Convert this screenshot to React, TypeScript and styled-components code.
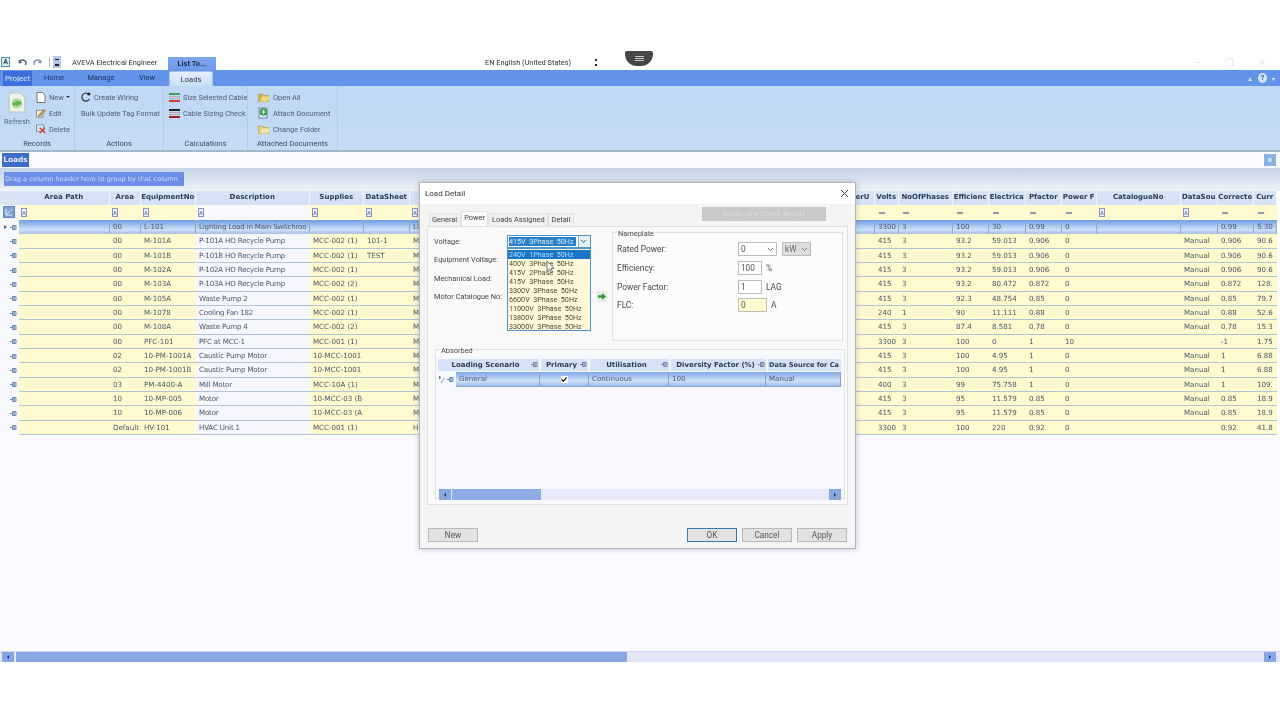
import React from "react";
import styled, { createGlobalStyle } from "styled-components";

const Global = createGlobalStyle`
  html, body { margin: 0; padding: 0; background: #fff; }
  * { box-sizing: border-box; }
`;

const UI = `Roboto, "Liberation Sans", sans-serif`;
const GRIDFONT = `"DejaVu Sans", "Liberation Sans", sans-serif`;

const Page = styled.div`
  width: 1280px; height: 720px; position: relative; overflow: hidden;
  background: #fff; display: flex; flex-direction: column;
  font-family: ${UI}; color: #333; filter: blur(0.3px);
`;
const TopBlank = styled.div`height: 54px;`;

const TitleBar = styled.div`
  height: 16px; display: flex; align-items: center; background: #fff; position: relative;
`;
const QatSlot = styled.span<{ $w: number }>`
  width: ${p => p.$w}px; display: flex; align-items: center; justify-content: center; flex: none;
`;
const AppMark = styled.span`
  width: 9px; height: 10px; margin-left: 1px; border: 1px solid #5a8f9f; background: #d8eef2;
  color: #24505f; font: bold 7px/8px ${UI}; text-align: center; flex: none;
`;
const QatSep = styled.span`width: 1px; height: 10px; background: #bbb; margin: 0 3px 0 2px; flex: none;`;
const QatDrop = styled.span`
  width: 8px; height: 12px; background: #b4c6e6; flex: none; display: flex; align-items: center; justify-content: center;
  &::after { content: ""; width: 4px; height: 4px; border-top: 1px solid #223; border-bottom: 2px solid #223; }
`;
const AppTitle = styled.span`font-size: 7.4px; color: #333; margin-left: 11px; width: 96px; flex: none; white-space: nowrap;`;
const ContextTab = styled.span`
  width: 48px; height: 13px; align-self: flex-end; background: linear-gradient(#7fa6ec, #6f9aea);
  color: #1c2c50; font: bold 7.5px/13px ${UI}; text-align: center; flex: none;
`;
const Language = styled.span`font-size: 7.4px; color: #333; margin-left: 269px; width: 110px; flex: none; white-space: nowrap;`;
const LangDots = styled.span`
  width: 2px; height: 7px; flex: none; border-top: 2px solid #222; border-bottom: 2px solid #222;
`;
const ScreenHandle = styled.div`
  position: absolute; left: 625px; top: -3px; width: 28px; height: 15px; background: #464646;
  border-radius: 2px 2px 12px 12px; display: flex; flex-direction: column; align-items: center; justify-content: center; gap: 1px;
  & > i { display: block; width: 9px; height: 1px; background: #ccc; }
`;
const WinButtons = styled.div`
  position: absolute; right: 14px; top: 4px; display: flex; gap: 24px; color: #e6e6e6; font-size: 10px; line-height: 10px;
`;

const TabBar = styled.div`
  height: 16px; background: #6494ea; display: flex; align-items: stretch; position: relative;
`;
const ProjectTab = styled.span`
  margin-left: 3px; width: 29px; margin-top: 1px; background: #3e6edb; color: #dfe8ff;
  font-size: 8px; line-height: 15px; text-align: center;
`;
const RibbonTab = styled.span<{ $c: number }>`
  position: absolute; left: ${p => p.$c - 25}px; width: 50px; top: 0; text-align: center;
  font-size: 7.5px; line-height: 16px; color: #1d3468;
`;
const ActiveTab = styled.span`
  position: absolute; left: 169px; width: 44px; top: 1px; bottom: 0; text-align: center;
  background: linear-gradient(#e3eefc, #c9ddf7); border: 1px solid #a9c4ea; border-bottom: 0; border-radius: 2px 2px 0 0;
  font-size: 7.6px; line-height: 15px; color: #2b3a58;
`;
const HelpCluster = styled.div`
  position: absolute; right: 5px; top: 3px; display: flex; align-items: center; gap: 5px;
  color: #e8f0ff; font-size: 6px;
`;
const HelpDot = styled.span`
  width: 9px; height: 10px; border-radius: 50%; background: #d5e4fa; color: #2e5fb5;
  font: bold 7px/10px ${UI}; text-align: center;
`;

const Ribbon = styled.div`
  height: 64px; background: linear-gradient(#c0d8f6, #c5dbf6); display: flex;
`;
const RGroup = styled.div<{ $w: number }>`
  width: ${p => p.$w}px; flex: none; display: flex; flex-direction: column; border-right: 1px solid #b4cbe8;
`;
const RBody = styled.div<{ $pl: number }>`
  flex: 1; min-height: 0; display: flex; padding-left: ${p => p.$pl}px; gap: 4px;
`;
const RLabel = styled.div`
  height: 15px; text-align: center; font-size: 7.6px; line-height: 17px; color: #3c4a5e; white-space: nowrap;
`;
const RefreshCol = styled.div`
  width: 30px; display: flex; flex-direction: column; align-items: center; padding-top: 6px; flex: none;
  font-size: 7.6px; color: #51688a; gap: 4px; line-height: 10px;
`;
const RCol = styled.div`display: flex; flex-direction: column; padding-top: 3px;`;
const RItem = styled.div`
  height: 16px; flex: none; display: flex; align-items: center; gap: 3px; white-space: nowrap;
  font-size: 7.4px; color: #4a5b75;
`;
const RIconSlot = styled.span`width: 10px; display: flex; justify-content: center; flex: none;`;
const Caret = styled.span`
  width: 0; height: 0; border: 2px solid transparent; border-top: 2.5px solid #334; margin: 2px 0 0 -1px;
`;

const LoadsBar = styled.div`
  height: 18px; margin-top: 0; border-top: 2px solid #a3b6ca; background: #fbfbff; display: flex; align-items: center; justify-content: space-between; padding: 0 4px 0 2px;
`;
const LoadsTab = styled.span`
  width: 27px; height: 14px; background: #3d6cc9; color: #e6eeff; font: bold 7.4px/14px ${GRIDFONT}; text-align: center;
`;
const CloseBox = styled.span`
  width: 12px; height: 12px; background: #8cb0e2; color: #e5eeff; font: bold 9px/12px ${UI}; text-align: center;
`;
const GroupBand = styled.div`
  height: 23px; background: linear-gradient(#c4d3e6, #eff3f9); padding: 4px 0 0 4px;
`;
const DragHint = styled.div`
  width: 180px; height: 14px; background: #6c8de8; color: #cfdcff;
  font: 6.6px/14px ${GRIDFONT}; padding-left: 1px; white-space: nowrap;
`;

const COLS = "19px 91px 31px 55px 114px 54px 46px 425px 40px 24px 54px 36px 37px 36px 35px 84px 37px 36px 23px";

const GridWrap = styled.div`
  background: #f5f7fc; width: 1277px; flex: none;
`;
const HeadRow = styled.div`
  display: grid; grid-template-columns: ${COLS}; height: 14px; margin-top: 0;
`;
const CornerCell = styled.div`background: #d8e3f4;`;
const HeadCell = styled.div`
  background: #d6e3f6; margin-right: 1.5px; text-align: center; overflow: hidden; white-space: nowrap;
  font: bold 7px/13px ${GRIDFONT}; color: #2a3a5c;
`;
const FilterRow = styled.div`
  display: grid; grid-template-columns: ${COLS}; height: 15px;
`;
const ClearFilter = styled.div`
  margin: 1px 4px 0 3px; height: 12px; background: #7c9ed9; border: 1px solid #6487c6;
  display: flex; align-items: center; justify-content: center;
`;
const FilterCell = styled.div<{ $white?: boolean }>`
  background: ${p => (p.$white ? "#f8f9fd" : "#fffbcf")}; display: flex; align-items: center; padding-left: 2px;
`;
const FilterA = styled.span`
  width: 6px; height: 9px; border: 1px solid #8b93c6; background: #f0f2fb; color: #4d569e; font: 6px/7px ${UI}; text-align: center; overflow: hidden;
`;
const FilterDash = styled.span`width: 6px; height: 2px; background: #8d99ad; margin-left: 2px;`;

const Rows = styled.div`
  display: grid; grid-auto-rows: 14.33px; border-right: 1px solid #b7c6da;
`;
const Row = styled.div<{ $sel?: boolean }>`
  display: grid; grid-template-columns: ${COLS}; position: relative;
  background: ${p => (p.$sel ? "linear-gradient(#6e9be2 0%, #b6cff3 50%, #cfe0f8 70%, #9ebdec 100%)" : "transparent")};
`;
const Sel = styled.div`
  background: #f8f9fd; display: flex; align-items: center; justify-content: flex-end; padding-right: 2px; gap: 3px;
`;
const SelArrow = styled.span`
  width: 0; height: 0; border: 2.5px solid transparent; border-left: 3px solid #49628c; border-right: 0;
`;
const Cell = styled.div<{ $white?: boolean; $sel?: boolean }>`
  background: ${p => (p.$sel ? "transparent" : p.$white ? "#f5f7fc" : "#fffbcf")};
  border-bottom: 1px solid #b4c4d8; border-right: ${p => (p.$sel ? "1px solid #8fa9cf" : "0")};
  padding-left: 3px; overflow: hidden; white-space: nowrap;
  font: 7.1px/13px ${GRIDFONT}; color: #4b5568;
  letter-spacing: ${p => (p.$white ? "-0.18px" : "0")};
`;

const Filler = styled.div`flex: 1; background: #fafaff; display: flex; flex-direction: column; justify-content: flex-end;`;
const HScroll = styled.div`
  height: 11px; background: #e5e6f8; display: flex; align-items: stretch; border-top: 1px solid #cfd4ee; padding-right: 4px;
`;
const ScrollBtn = styled.span<{ $dir: "l" | "r" }>`
  width: 12px; background: #86a6e3; flex: none; display: flex; align-items: center; justify-content: center;
  margin-left: ${p => (p.$dir === "r" ? "auto" : "2px")}; margin-right: ${p => (p.$dir === "r" ? "0" : "2px")};
  &::after {
    content: ""; width: 0; height: 0; border: 2.5px solid transparent;
    ${p => (p.$dir === "l" ? "border-right: 2.5px solid #1b2f6e; border-left: 0;" : "border-left: 2.5px solid #1b2f6e; border-right: 0;")}
  }
`;
const ScrollThumb = styled.span`width: 611px; background: #89a8e3; flex: none;`;
const BottomBlank = styled.div`height: 58px; background: #fff;`;

/* dialog */
const Dialog = styled.div`
  position: absolute; left: 419px; top: 182px; width: 437px; height: 367px;
  background: #f4f4f4; border: 1px solid #b4b4b4; box-shadow: 0 0 6px rgba(90,100,120,.35);
  display: flex; flex-direction: column; font-size: 8.2px; color: #444;
`;
const DlgTitle = styled.div`
  height: 21px; background: #fff; display: flex; align-items: center; justify-content: space-between;
  padding: 0 6px 0 5px; font-size: 8px; color: #333;
`;
const TabRow = styled.div`
  height: 22px; display: flex; align-items: flex-end; padding-left: 8.500px; position: relative;
`;
const DTab = styled.span<{ $on?: boolean }>`
  height: ${p => (p.$on ? "15px" : "13px")}; padding: 0 2.500px; background: ${p => (p.$on ? "#fbfbfb" : "#f0f0f0")};
  border: 0 solid #e2e2e2; border-width: 1px 1px 0 1px; font-size: 7.4px; line-height: 12px; color: #444; white-space: nowrap;
`;
const CheckReport = styled.button`
  margin-left: auto; margin-right: 29px; align-self: flex-start; margin-top: 3px; width: 124px; height: 14px; border: 0; padding: 0;
  background: #c9c9c9; color: #dcdcdc; font: 7.4px/14px ${UI};
`;
const Panel = styled.div`
  margin: 0 7px; height: 279px; background: #f9f9f9; border: 1px solid #e0e0e0; padding: 5px 4px 0 6px;
`;
const TopRow = styled.div`display: flex; height: 108px;`;
const FormCol = styled.div`width: 178px; flex: none;`;
const FormRow = styled.div`
  height: 18.500px; display: flex; align-items: center; position: relative; font-size: 7.400px; color: #484848; white-space: nowrap;
`;
const FormLabel = styled.span`width: 73px; flex: none;`;
const ComboWrap = styled.div`position: relative; width: 84px; height: 12px; flex: none;`;
const VoltCombo = styled.div`
  height: 13px; border: 1px solid #4f93c4; background: #fff; display: flex; align-items: center; padding-left: 1px;
`;
const VoltValue = styled.span`
  background: #2a7fc9; color: #d5e8f7; font-size: 7.200px; line-height: 9px; white-space: pre; flex: none; width: 67px; overflow: hidden;
`;
const VoltArrow = styled.span`
  margin-left: auto; width: 12px; height: 11px; background: #e3eef8; border-left: 1px solid #7fb0d6;
  display: flex; align-items: center; justify-content: center;
`;
const DropList = styled.ul`
  position: absolute; left: 0; top: 13px; width: 84px; height: 83px; margin: 0; padding: 1px 0 0; list-style: none;
  background: #fff9dc; border: 1px solid #4f93c4; z-index: 3;
`;
const DropItem = styled.li<{ $on?: boolean }>`
  height: 8.950px; padding-left: 1px; font-size: 7.200px; line-height: 9px; white-space: pre;
  background: ${p => (p.$on ? "#1876c9" : "transparent")}; color: ${p => (p.$on ? "#b9dbf5" : "#4c4a35")};
`;
const CursorMark = styled.svg`position: absolute; left: 39px; top: 26px; z-index: 4;`;
const GoButton = styled.span`
  width: 10px; height: 11px; margin-left: 90px; background: #e6ebe6; display: flex; align-items: center; justify-content: center; flex: none;
`;
const FieldBox = styled.div`
  border: 1px solid #e2e2e2; background: #fcfcfc;
`;
const Legend = styled.div`
  width: fit-content; margin: -5px 0 0 4px; padding: 0 1px; background: #f9f9f9; font-size: 7.400px; line-height: 11px; color: #4a4a4a;
`;
const Nameplate = styled(FieldBox)`width: 232px; height: 109px;`;
const PlateRows = styled.div`padding: 1px 0 0 4px;`;
const PlateRow = styled.div`
  height: 18.700px; display: flex; align-items: center; font-size: 8.400px; color: #484848; white-space: nowrap; gap: 4px;
`;
const PlateLabel = styled.span`width: 117px; flex: none;`;
const Input = styled.span<{ $w: number; $tint?: boolean }>`
  width: ${p => p.$w}px; height: 14px; border: 1px solid #bdbdbd; background: ${p => (p.$tint ? "#fffbd0" : "#fff")};
  font-size: 8.200px; line-height: 12px; padding-left: 2px; color: #555; display: flex; align-items: center; justify-content: space-between; flex: none;
`;
const GreyCombo = styled(Input)`background: #dedede; color: #666; margin-left: 1px;`;
const Chev = styled.svg`margin-right: 2px; flex: none;`;
const Absorbed = styled(FieldBox)`
  width: 410px; height: 150px; margin: 9px 0 0 1px; background: #f8f9ff;
`;
const ABS_COLS = "18px 84px 49px 80px 97px 1fr";
const AbsHead = styled.div`
  display: grid; grid-template-columns: 103px 49px 81px 97px 73px; margin: 3px 0 0 2px; height: 12px;
`;
const AbsHeadCell = styled.div<{ $start?: boolean }>`
  background: #d6e3f6; margin-right: ${p => (p.$start ? "0" : "2px")}; display: flex; align-items: center;
  justify-content: ${p => (p.$start ? "flex-start" : "center")}; position: relative;
  font: bold ${p => (p.$start ? "6.600px" : "7px")}/12px ${GRIDFONT}; color: #2a3a5c; white-space: nowrap; overflow: hidden;
  padding: ${p => (p.$start ? "0 0 0 1px" : "0 6px 0 0")};
`;
const HeadPin = styled.span`position: absolute; right: 1px; top: 3px; display: flex;`;
const AbsRow = styled.div`
  display: grid; grid-template-columns: ${ABS_COLS}; margin: 1px 0 0 2px; height: 15px; width: 403px;
`;
const AbsSel = styled.div`display: flex; align-items: center; justify-content: space-between; padding: 0 2px 0 1px; background: #f8f9ff;`;
const AbsCell = styled.div<{ $center?: boolean }>`
  background: linear-gradient(#7ea6e6 0%, #b9d1f4 45%, #cfe0f8 65%, #9dbcec 100%);
  border-right: 1px solid #88a4cc; border-bottom: 1px solid #8ca6cf;
  font: 7.100px/14px ${GRIDFONT}; color: #4a5a78; padding-left: 3px;
  ${p => p.$center && "display: flex; align-items: center; justify-content: center; padding: 0;"}
`;
const AbsCheck = styled.span`
  width: 7px; height: 7px; background: #fff; display: flex; align-items: center; justify-content: center;
`;
const AbsSpace = styled.div`height: 102px;`;
const AbsScroll = styled.div`
  height: 11px; margin: 0 3px 0 3px; background: #e7e8f8; display: flex; align-items: stretch;
`;
const AbsBtn = styled.span<{ $dir: "l" | "r" }>`
  width: 12px; background: #88a8e4; flex: none; margin-left: ${p => (p.$dir === "r" ? "auto" : "0")}; display: flex; align-items: center; justify-content: center;
  &::after {
    content: ""; width: 0; height: 0; border: 2.5px solid transparent;
    ${p => (p.$dir === "l" ? "border-right: 2.5px solid #1b2f6e; border-left: 0;" : "border-left: 2.5px solid #1b2f6e; border-right: 0;")}
  }
`;
const AbsThumb = styled.span`width: 89px; margin-left: 1px; background: #8dabe4;`;
const DlgFooter = styled.div`
  display: flex; padding: 23px 8px 0 8px;
`;
const DlgButton = styled.button<{ $primary?: boolean; $left?: number }>`
  width: 50px; height: 14px; padding: 0; background: #e2e2e2; color: #555;
  border: ${p => (p.$primary ? "1px solid #2f7fb5" : "1px solid #b8b8b8")};
  font: 8.200px/12px ${UI}; margin-left: ${p => p.$left ?? 0}px;
`;

/* icons */
const Pin = () => (
  <svg width="7" height="5" viewBox="0 0 7 5"><path d="M0 2.500h2.500M2.500.5h3.500v4H2.500z M4 .5v4" fill="#c9d6ea" stroke="#5b7299" strokeWidth=".8" /></svg>
);
const Undo = () => (
  <svg width="9" height="9" viewBox="0 0 9 9"><path d="M1 4.500C2 1.500 6 1 8 4l-.5 3" fill="none" stroke="#51617a" strokeWidth="1.400" /><path d="M.5 1.500l.5 4 3.500-.8z" fill="#51617a" /></svg>
);
const Redo = () => (
  <svg width="9" height="9" viewBox="0 0 9 9"><path d="M8 4.500C7 1.500 3 1 1 4l.5 3" fill="none" stroke="#8294ad" strokeWidth="1.400" /><path d="M8.500 1.500L8 5.500 4.500 4.700z" fill="#8294ad" /></svg>
);
const RefreshIcon = () => (
  <svg width="18" height="21" viewBox="0 0 17 20">
    <path d="M1 1h11l4 4v14H1z" fill="#eef1ea" stroke="#bcc4b8" />
    <circle cx="8.500" cy="11" r="4.500" fill="#5eb548" />
    <path d="M5.500 10a3 3 0 0 1 5.500-1M11.500 12a3 3 0 0 1-5.500 1" fill="none" stroke="#e6f5df" strokeWidth="1.200" />
  </svg>
);
const DocIcon = () => (
  <svg width="10" height="11" viewBox="0 0 10 11"><path d="M1 .5h5.500L9 3v7.500H1z" fill="#fff" stroke="#6b7280" /></svg>
);
const EditIcon = () => (
  <svg width="11" height="10" viewBox="0 0 11 10"><rect x=".5" y="2" width="7" height="7.500" fill="#f1f1f1" stroke="#7b7f88" /><path d="M3 7l6-6 1.500 1.500-6 6H3z" fill="#d79b3a" stroke="#7d5a1f" strokeWidth=".5" /></svg>
);
const DeleteIcon = () => (
  <svg width="11" height="10" viewBox="0 0 11 10"><rect x=".5" y=".5" width="8" height="7" fill="#dde6f4" stroke="#7a8aa5" /><path d="M4 3.500l6 6M10 3.500l-6 6" stroke="#d23a2a" strokeWidth="1.500" /></svg>
);
const WiringIcon = () => (
  <svg width="10" height="10" viewBox="0 0 10 10"><path d="M8 2.500A4 4 0 1 0 8.500 7" fill="none" stroke="#444" strokeWidth="1.300" /><circle cx="7.800" cy="2" r="1.500" fill="#222" /></svg>
);
const CableIcon = ({ c1, c2 }: { c1: string; c2: string }) => (
  <svg width="11" height="9" viewBox="0 0 11 9"><rect y="0" width="11" height="2" fill={c1} /><rect y="3.500" width="11" height="2" fill="#d9dbe2" stroke="#555" strokeWidth=".3" /><rect y="7" width="11" height="2" fill={c2} /></svg>
);
const FolderIcon = ({ pale }: { pale?: boolean }) => (
  <svg width="12" height="10" viewBox="0 0 12 10"><path d="M.5 2h4l1 1.500h5V9.500H.5z" fill={pale ? "#e3cf7c" : "#d7b04a"} stroke="#a98a35" strokeWidth=".5" /><path d="M2 9.500L4 4.500h7.500L10 9.500z" fill={pale ? "#f3e6a8" : "#f2da86"} /></svg>
);
const AttachIcon = () => (
  <svg width="12" height="12" viewBox="0 0 12 12"><rect x="1" y="1" width="8" height="10" fill="#eaf1fa" stroke="#6d84a3" /><circle cx="5.500" cy="5" r="3.800" fill="#2f9e3e" /><path d="M5.500 2.800v4.400M3.300 5h4.400" stroke="#fff" strokeWidth="1.200" /></svg>
);
const ChevDown = ({ color = "#777" }: { color?: string }) => (
  <Chev width="7" height="5" viewBox="0 0 7 5"><path d="M1 1l2.500 2.500L6 1" fill="none" stroke={color} strokeWidth="1" /></Chev>
);

const voltages = [
  "240V  1Phase  50Hz", "400V  3Phase  50Hz", "415V  2Phase  50Hz", "415V  3Phase  50Hz",
  "3300V  3Phase  50Hz", "6600V  3Phase  50Hz", "11000V  3Phase  50Hz", "13800V  3Phase  50Hz", "33000V  3Phase  50Hz",
];

const heads = ["Area Path", "Area", "EquipmentNo", "Description", "Supplies", "DataSheet", "Eq", "PowerU", "Volts", "NoOfPhases", "Efficienc", "Electrica", "Pfactor", "Power F", "CatalogueNo", "DataSou", "Correcte", "Curr"];
const filterA = [true, true, true, true, true, true, true, false, false, false, false, false, false, false, true, true, false, false];

const data: string[][] = [
  ["", "00", "L-101", "Lighting Load in Main Switchroo", "", "", "Li", "kW", "3300", "3", "100", "30", "0.99", "0", "", "", "0.99", "5.30"],
  ["", "00", "M-101A", "P-101A HO Recycle Pump", "MCC-002 (1)", "101-1", "M", "kW", "415", "3", "93.2", "59.013", "0.906", "0", "", "Manual", "0.906", "90.6"],
  ["", "00", "M-101B", "P-101B HO Recycle Pump", "MCC-002 (1)", "TEST", "M", "kW", "415", "3", "93.2", "59.013", "0.906", "0", "", "Manual", "0.906", "90.6"],
  ["", "00", "M-102A", "P-102A HO Recycle Pump", "MCC-002 (1)", "", "M", "kW", "415", "3", "93.2", "59.013", "0.906", "0", "", "Manual", "0.906", "90.6"],
  ["", "00", "M-103A", "P-103A HO Recycle Pump", "MCC-002 (2)", "", "M", "kW", "415", "3", "93.2", "80.472", "0.872", "0", "", "Manual", "0.872", "128."],
  ["", "00", "M-105A", "Waste Pump 2", "MCC-002 (1)", "", "M", "kW", "415", "3", "92.3", "48.754", "0.85", "0", "", "Manual", "0.85", "79.7"],
  ["", "00", "M-1078", "Cooling Fan 182", "MCC-002 (1)", "", "M", "kW", "240", "1", "90", "11.111", "0.88", "0", "", "Manual", "0.88", "52.6"],
  ["", "00", "M-108A", "Waste Pump 4", "MCC-002 (2)", "", "M", "kW", "415", "3", "87.4", "8.581", "0.78", "0", "", "Manual", "0.78", "15.3"],
  ["", "00", "PFC-101", "PFC at MCC-1", "MCC-001 (1)", "", "M", "kW", "3300", "3", "100", "0", "1", "10", "", "", "-1", "1.75"],
  ["", "02", "10-PM-1001A", "Caustic Pump Motor", "10-MCC-1001", "", "M", "kW", "415", "3", "100", "4.95", "1", "0", "", "Manual", "1", "6.88"],
  ["", "02", "10-PM-1001B", "Caustic Pump Motor", "10-MCC-1001", "", "M", "kW", "415", "3", "100", "4.95", "1", "0", "", "Manual", "1", "6.88"],
  ["", "03", "PM-4400-A", "Mill Motor", "MCC-10A (1)", "", "M", "kW", "400", "3", "99", "75.758", "1", "0", "", "Manual", "1", "109."],
  ["", "10", "10-MP-005", "Motor", "10-MCC-03 (B", "", "M", "kW", "415", "3", "95", "11.579", "0.85", "0", "", "Manual", "0.85", "18.9"],
  ["", "10", "10-MP-006", "Motor", "10-MCC-03 (A", "", "M", "kW", "415", "3", "95", "11.579", "0.85", "0", "", "Manual", "0.85", "18.9"],
  ["", "Default", "HV-101", "HVAC Unit 1", "MCC-001 (1)", "", "H", "kW", "3300", "3", "100", "220", "0.92", "0", "", "", "0.92", "41.8"],
];

export default function App() {
  return (
    <Page>
      <Global />
      <TopBlank />
      <TitleBar>
        <AppMark>A</AppMark>
        <QatSlot $w={8} />
        <QatSlot $w={9}><Undo /></QatSlot>
        <QatSlot $w={6} />
        <QatSlot $w={9}><Redo /></QatSlot>
        <QatSlot $w={5} />
        <QatSep />
        <QatDrop />
        <AppTitle>AVEVA Electrical Engineer</AppTitle>
        <ContextTab>List To...</ContextTab>
        <Language>EN English (United States)</Language>
        <LangDots />
        <ScreenHandle><i /><i /><i /></ScreenHandle>
        <WinButtons><span>–</span><span>❐</span><span>✕</span></WinButtons>
      </TitleBar>
      <TabBar>
        <ProjectTab>Project</ProjectTab>
        <RibbonTab $c={54}>Home</RibbonTab>
        <RibbonTab $c={101}>Manage</RibbonTab>
        <RibbonTab $c={147}>View</RibbonTab>
        <ActiveTab>Loads</ActiveTab>
        <HelpCluster><span>▲</span><HelpDot>?</HelpDot><span>▾</span></HelpCluster>
      </TabBar>
      <Ribbon>
        <RGroup $w={75}>
          <RBody $pl={2}>
            <RefreshCol><RefreshIcon />Refresh</RefreshCol>
            <RCol>
              <RItem><RIconSlot><DocIcon /></RIconSlot>New<Caret /></RItem>
              <RItem><RIconSlot><EditIcon /></RIconSlot>Edit</RItem>
              <RItem><RIconSlot><DeleteIcon /></RIconSlot>Delete</RItem>
            </RCol>
          </RBody>
          <RLabel>Records</RLabel>
        </RGroup>
        <RGroup $w={89}>
          <RBody $pl={6}>
            <RCol>
              <RItem><WiringIcon />Create Wiring</RItem>
              <RItem>Bulk Update Tag Format</RItem>
            </RCol>
          </RBody>
          <RLabel>Actions</RLabel>
        </RGroup>
        <RGroup $w={84}>
          <RBody $pl={5}>
            <RCol>
              <RItem><CableIcon c1="#3aa655" c2="#d43a3a" />Size Selected Cable</RItem>
              <RItem><CableIcon c1="#222" c2="#a81e1e" />Cable Sizing Check</RItem>
            </RCol>
          </RBody>
          <RLabel>Calculations</RLabel>
        </RGroup>
        <RGroup $w={90}>
          <RBody $pl={10}>
            <RCol>
              <RItem><FolderIcon />Open All</RItem>
              <RItem><AttachIcon />Attach Document</RItem>
              <RItem><FolderIcon pale />Change Folder</RItem>
            </RCol>
          </RBody>
          <RLabel>Attached Documents</RLabel>
        </RGroup>
      </Ribbon>
      <LoadsBar><LoadsTab>Loads</LoadsTab><CloseBox>×</CloseBox></LoadsBar>
      <GroupBand><DragHint>Drag a column header here to group by that column.</DragHint></GroupBand>
      <GridWrap>
        <HeadRow>
          <CornerCell />
          {heads.map(h => <HeadCell key={h}>{h}</HeadCell>)}
        </HeadRow>
        <FilterRow>
          <ClearFilter>
            <svg width="8" height="8" viewBox="0 0 8 8"><path d="M1 7L7 1M1 1h0v6h6" fill="none" stroke="#e8eefb" strokeWidth="1" /></svg>
          </ClearFilter>
          {heads.map((h, i) => (
            <FilterCell key={h} $white={i === 3}>
              {filterA[i] ? <FilterA>A</FilterA> : <FilterDash />}
            </FilterCell>
          ))}
        </FilterRow>
        <Rows>
          {data.map((r, i) => (
            <Row key={r[2]} $sel={i === 0}>
              <Sel>{i === 0 && <SelArrow />}<Pin /></Sel>
              {r.map((c, j) => (
                <Cell key={j} $white={j === 3} $sel={i === 0}>{c}</Cell>
              ))}
            </Row>
          ))}
        </Rows>
      </GridWrap>
      <Filler>
        <HScroll>
          <ScrollBtn $dir="l" />
          <ScrollThumb />
          <ScrollBtn $dir="r" />
        </HScroll>
      </Filler>
      <BottomBlank />

      <Dialog>
        <DlgTitle>
          <span>Load Detail</span>
          <svg width="9" height="9" viewBox="0 0 9 9"><path d="M1 1l7 7M8 1L1 8" stroke="#444" strokeWidth="1" /></svg>
        </DlgTitle>
        <TabRow>
          <DTab>General</DTab>
          <DTab $on>Power</DTab>
          <DTab>Loads Assigned</DTab>
          <DTab>Detail</DTab>
          <CheckReport disabled>Single Line Check Report</CheckReport>
        </TabRow>
        <Panel>
          <TopRow>
            <FormCol>
              <FormRow>
                <FormLabel>Voltage:</FormLabel>
                <ComboWrap>
                  <VoltCombo>
                    <VoltValue>415V  3Phase  50Hz</VoltValue>
                    <VoltArrow><ChevDown color="#3b6f98" /></VoltArrow>
                  </VoltCombo>
                  <DropList>
                    {voltages.map((v, i) => <DropItem key={v} $on={i === 0}>{v}</DropItem>)}
                  </DropList>
                  <CursorMark width="9" height="12" viewBox="0 0 9 12">
                    <path d="M1 0v10l2.500-2 1.500 3.500 1.500-.7L5 7.500h3.200z" fill="#fff" stroke="#444" strokeWidth=".7" />
                  </CursorMark>
                </ComboWrap>
              </FormRow>
              <FormRow><FormLabel>Equipment Voltage:</FormLabel></FormRow>
              <FormRow><FormLabel>Mechanical Load:</FormLabel></FormRow>
              <FormRow>
                <FormLabel>Motor Catalogue No:</FormLabel>
                <GoButton>
                  <svg width="8" height="7" viewBox="0 0 8 7"><path d="M0 2.300h4V0l4 3.500L4 7V4.700H0z" fill="#2e9a35" /></svg>
                </GoButton>
              </FormRow>
            </FormCol>
            <Nameplate>
              <Legend>Nameplate</Legend>
              <PlateRows>
                <PlateRow>
                  <PlateLabel>Rated Power:</PlateLabel>
                  <Input $w={39}>0<ChevDown /></Input>
                  <GreyCombo $w={29}>kW<ChevDown /></GreyCombo>
                </PlateRow>
                <PlateRow>
                  <PlateLabel>Efficiency:</PlateLabel>
                  <Input $w={24}>100</Input><span>%</span>
                </PlateRow>
                <PlateRow>
                  <PlateLabel>Power Factor:</PlateLabel>
                  <Input $w={24}>1</Input><span>LAG</span>
                </PlateRow>
                <PlateRow>
                  <PlateLabel>FLC:</PlateLabel>
                  <Input $w={29} $tint>0</Input><span>A</span>
                </PlateRow>
              </PlateRows>
            </Nameplate>
          </TopRow>
          <Absorbed>
            <Legend>Absorbed</Legend>
            <AbsHead>
              <AbsHeadCell>Loading Scenario<HeadPin><Pin /></HeadPin></AbsHeadCell>
              <AbsHeadCell>Primary<HeadPin><Pin /></HeadPin></AbsHeadCell>
              <AbsHeadCell>Utilisation<HeadPin><Pin /></HeadPin></AbsHeadCell>
              <AbsHeadCell>Diversity Factor (%)<HeadPin><Pin /></HeadPin></AbsHeadCell>
              <AbsHeadCell $start>Data Source for Ca</AbsHeadCell>
            </AbsHead>
            <AbsRow>
              <AbsSel>
                <svg width="7" height="8" viewBox="0 0 7 8"><path d="M0 0l2 1.500L0 3zM2 7l3.500-5" fill="#49628c" stroke="#6b7f9f" strokeWidth=".8" /></svg>
                <Pin />
              </AbsSel>
              <AbsCell>General</AbsCell>
              <AbsCell $center>
                <AbsCheck><svg width="6" height="5" viewBox="0 0 6 5"><path d="M.5 2.500L2.300 4.300 5.500.5" fill="none" stroke="#111" strokeWidth="1.200" /></svg></AbsCheck>
              </AbsCell>
              <AbsCell>Continuous</AbsCell>
              <AbsCell>100</AbsCell>
              <AbsCell>Manual</AbsCell>
            </AbsRow>
            <AbsSpace />
            <AbsScroll>
              <AbsBtn $dir="l" />
              <AbsThumb />
              <AbsBtn $dir="r" />
            </AbsScroll>
          </Absorbed>
        </Panel>
        <DlgFooter>
          <DlgButton>New</DlgButton>
          <DlgButton $primary $left={209}>OK</DlgButton>
          <DlgButton $left={5}>Cancel</DlgButton>
          <DlgButton $left={5}>Apply</DlgButton>
        </DlgFooter>
      </Dialog>
    </Page>
  );
}
